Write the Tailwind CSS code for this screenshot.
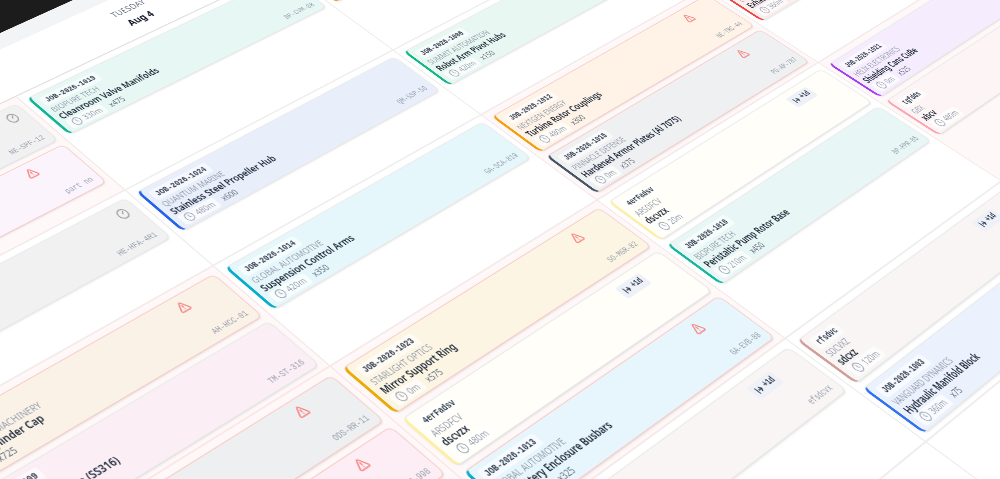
<!DOCTYPE html>
<html lang="en">
  <head>
    <meta charset="UTF-8" />
    <title>Schedule board</title>
    <script src="https://cdn.jsdelivr.net/npm/@tailwindcss/browser@4"></script>
  </head>
  <body class="bg-white">
    <div class="w-[1000px] h-[479px] overflow-hidden bg-white font-['Noto_Sans',sans-serif]">
      <div
        id="board"
        class="w-[1920px] origin-top-left blur-[0.4px] grid grid-cols-[repeat(4,480px)] grid-rows-[60px_23px_72px_181px_136px_168px_248px_168px_168px] [transform:matrix3d(.63708,-.28167,0,.00020035,.59868,.49507,0,-.00022938,0,0,1,0,-381.96,158.86,0,.9809)]"
      >
        <div class="col-span-4 bg-[#1c1c1c]"></div>
        <div class="col-span-4 bg-[#f3f4f6]"></div>
        <div class="flex flex-col items-center justify-center border-b border-[#dcdcdc] bg-white">
          <span class="text-[13px] tracking-wide text-gray-500">MONDAY</span>
          <span class="text-[15px] font-bold text-gray-900">Aug 3</span>
        </div>
        <div class="flex flex-col items-center justify-center border-b border-[#dcdcdc] bg-white">
          <span class="text-[13px] tracking-wide text-gray-500">TUESDAY</span>
          <span class="text-[15px] font-bold text-gray-900">Aug 4</span>
        </div>
        <div class="flex flex-col items-center justify-center border-b border-[#dcdcdc] bg-white">
          <span class="text-[13px] tracking-wide text-gray-500">WEDNESDAY</span>
          <span class="text-[15px] font-bold text-gray-900">Aug 5</span>
        </div>
        <div class="flex flex-col items-center justify-center border-b border-[#dcdcdc] bg-white">
          <span class="text-[13px] tracking-wide text-gray-500">THURSDAY</span>
          <span class="text-[15px] font-bold text-gray-900">Aug 6</span>
        </div>
      </div>
    </div>

    <script>
      const clockIcon = `<svg class="w-3.5 h-3.5 shrink-0" viewBox="0 0 24 24" fill="none" stroke="currentColor" stroke-width="2"><circle cx="12" cy="12" r="10"/><path d="M12 6v6l4 2"/></svg>`;
      const warnIcon = `<svg class="w-4 h-4 text-[#f87f7f]" viewBox="0 0 24 24" fill="none" stroke="currentColor" stroke-width="2.5" stroke-linecap="round" stroke-linejoin="round"><path d="m21.7 18-8-14a2 2 0 0 0-3.5 0l-8 14A2 2 0 0 0 4 21h16a2 2 0 0 0 1.7-3"/><path d="M12 9v4M12 17h.01"/></svg>`;
      const gaugeIcon = `<svg class="w-4 h-4 text-[#9a9a9a]" viewBox="0 0 24 24" fill="none" stroke="currentColor" stroke-width="2.2" stroke-linecap="round"><circle cx="12" cy="12" r="10"/><path d="m12 12 4-5"/></svg>`;
      const shiftIcon = `<svg class="w-3 h-3" viewBox="0 0 24 24" fill="none" stroke="currentColor" stroke-width="3" stroke-linecap="round" stroke-linejoin="round"><path d="M4 5v14M9 12h11M15 7l5 5-5 5"/></svg>`;
      const shiftBadge = `<span class="flex items-center gap-1 rounded bg-[#eef1f8] px-1.5 py-0.5 font-['Liberation_Mono',monospace] text-[10px] leading-[14px] font-bold text-gray-700">${shiftIcon}+1d</span>`;

      const BG_RED = "bg-[#fef8f8] border border-[#fde6e6]";
      const BG_PLAIN = "bg-white border border-[#eeeeee]";

      function card(c) {
        const frame = c.warn ? "border-[#fbc9c4]" : "border-[#e9e9e9]";
        let top = "";
        if (c.warn) top = `<span class="absolute right-[57px] top-[7px]">${warnIcon}</span>`;
        if (c.gauge) top = `<span class="absolute right-[12px] top-[8px]">${gaugeIcon}</span>`;
        if (c.shift) top = `<span class="absolute right-[50px] top-[8px]">${shiftBadge}</span>`;
        return `<div class="relative h-[72px] shrink-0 overflow-hidden rounded-lg border border-l-4 shadow-sm px-2 pt-1.5 ${c.bg} ${frame} ${c.bar}">
          ${c.job ? `<div class="flex"><span class="rounded bg-white/60 px-1.5 font-['Liberation_Mono',monospace] text-[10.5px] leading-4 font-bold text-gray-700">${c.job}</span></div>
          <div class="mt-px text-[11px] leading-[14px] uppercase text-gray-400 whitespace-nowrap">${c.cust}</div>
          <div class="text-[12.5px] leading-[14px] font-semibold text-gray-800 whitespace-nowrap">${c.title}</div>
          <div class="flex items-center gap-2 text-[11px] leading-4 text-gray-500">
            <span class="flex items-center gap-1 rounded bg-white/70 px-1.5 text-gray-400">${clockIcon}${c.time}</span>
            <span>${c.qty}</span>
          </div>` : ""}
          ${top}
          <span class="absolute right-[10px] bottom-[4px] font-['Liberation_Mono',monospace] text-[10px] text-gray-400">${c.code}</span>
        </div>`;
      }

      function cell(tint, cards) {
        return `<div class="flex flex-col gap-2 p-2 ${tint}">${cards.map(card).join("")}</div>`;
      }

      const rows = [
        // row 1
        [
          [BG_RED, [
            { bg: "bg-[#f1f1f1]", bar: "border-l-[#e2e2e2]", gauge: 1, code: "NE-SPF-12" },
            { bg: "bg-[#fbf4fd]", bar: "border-l-[#fbcfcf]", warn: 1, code: "part no" },
          ]],
          [BG_PLAIN, [
            { bg: "bg-[#e7f7f4]", bar: "border-l-[#10b595]", job: "JOB-2026-1019", cust: "Biopure Tech", title: "Cleanroom Valve Manifolds", time: "330m", qty: "x475", code: "BP-CVM-88" },
          ]],
          [BG_PLAIN, [
            { bg: "bg-[#fef3e6]", bar: "border-l-[#f59e0b]", job: "JOB-2026-1007", cust: "Nextgen Energy", title: "Turbine Housing", time: "240m", qty: "x200", code: "NE-THG-12" },
          ]],
          [BG_PLAIN, []],
        ],
        // row 2
        [
          [BG_PLAIN, [
            { bg: "bg-[#f1f1f1]", bar: "border-l-[#e2e2e2]", gauge: 1, code: "HE-HFA-4R1" },
          ]],
          [BG_PLAIN, [
            { bg: "bg-[#e9eefb]", bar: "border-l-[#2563eb]", job: "JOB-2026-1024", cust: "Quantum Marine", title: "Stainless Steel Propeller Hub", time: "480m", qty: "x600", code: "QM-SSP-58" },
          ]],
          [BG_PLAIN, [
            { bg: "bg-[#e8f7f1]", bar: "border-l-[#10b981]", job: "JOB-2026-1006", cust: "Summit Automation", title: "Robot Arm Pivot Hubs", time: "420m", qty: "x150", code: "SA-RAP-22" },
          ]],
          [BG_PLAIN, []],
        ],
        // row 3
        [
          [BG_RED, [
            { bg: "bg-[#faf1e7]", bar: "border-l-[#f59e0b]", warn: 1, job: "JOB-2026-1011", cust: "Magnum Heavy Machinery", title: "Hydraulics Cylinder Cap", time: "360m", qty: "x725", code: "AH-HCC-01" },
            { bg: "bg-[#fbeef5]", bar: "border-l-[#f9a8d4]", job: "JOB-2026-1009", cust: "Titan Medical", title: "Surgical Table Frame (SS316)", time: "300m", qty: "x250", code: "TM-ST-316" },
          ]],
          [BG_PLAIN, [
            { bg: "bg-[#e6f7fb]", bar: "border-l-[#06aecb]", job: "JOB-2026-1014", cust: "Global Automotive", title: "Suspension Control Arms", time: "420m", qty: "x350", code: "GA-SCA-819" },
          ]],
          [BG_RED, [
            { bg: "bg-[#fef3e6]", bar: "border-l-[#f59e0b]", warn: 1, job: "JOB-2026-1012", cust: "Nextgen Energy", title: "Turbine Rotor Couplings", time: "480m", qty: "x300", code: "NE-TRC-44" },
            { bg: "bg-[#eff0f2]", bar: "border-l-[#475569]", warn: 1, job: "JOB-2026-1015", cust: "Pinnacle Defense", title: "Hardened Armor Plates (Al 7075)", time: "0m", qty: "x375", code: "PD-AP-787" },
          ]],
          [BG_PLAIN, [
            { bg: "bg-[#fdeeee]", bar: "border-l-[#ef4444]", job: "JOB-2026-1017", cust: "Eclipse Aero", title: "Exhaust Nozzle", time: "360m", qty: "x120", code: "EA-EN-12" },
          ]],
        ],
        // row 4
        [
          [BG_RED, [
            { bg: "bg-[#eeeff1]", bar: "border-l-[#94a3b8]", warn: 1, code: "ODS-RR-11" },
            { bg: "bg-[#fdeef5]", bar: "border-l-[#f9a8d4]", warn: 1, code: "BP-998" },
          ]],
          [BG_RED, [
            { bg: "bg-[#fdf5e3]", bar: "border-l-[#eaaa08]", warn: 1, job: "JOB-2026-1023", cust: "Starlight Optics", title: "Mirror Support Ring", time: "0m", qty: "x575", code: "SO-MGR-82" },
            { bg: "bg-[#fffef8]", bar: "border-l-[#fdf0a5]", shift: 1, job: "4erFadsv", cust: "ARSDFCV", title: "dscvzx", time: "480m", qty: "", code: "" },
            { bg: "bg-[#e7f6fc]", bar: "border-l-[#06aecb]", warn: 1, job: "JOB-2026-1013", cust: "Global Automotive", title: "EV Battery Enclosure Busbars", time: "300m", qty: "x325", code: "GA-EVB-88" },
          ]],
          [BG_PLAIN, [
            { bg: "bg-[#fffef8]", bar: "border-l-[#fdf0a5]", shift: 1, job: "4erFadsv", cust: "ARSDFCV", title: "dscvzx", time: "20m", qty: "", code: "" },
            { bg: "bg-[#e8f7f5]", bar: "border-l-[#14b8a0]", job: "JOB-2026-1018", cust: "Biopure Tech", title: "Peristaltic Pump Rotor Base", time: "210m", qty: "x450", code: "BP-PPR-85" },
          ]],
          [BG_RED, [
            { bg: "bg-[#f5ecfe]", bar: "border-l-[#a23cf0]", job: "JOB-2026-1021", cust: "Helix Electronics", title: "Shielding Cans CuBe", time: "0m", qty: "x525", code: "HE-SC-21" },
            { bg: "bg-[#fdf5f5]", bar: "border-l-[#fda4af]", job: "tgfdds", cust: "GBX", title: "xbcv", time: "480m", qty: "", code: "" },
          ]],
        ],
        // row 5
        [
          [BG_PLAIN, []],
          [BG_PLAIN, [
            { bg: "bg-[#f8f5f4]", bar: "border-l-[#dcc8c4]", shift: 1, job: "rfsdvc", cust: "SDCVXZ", title: "sdcxz", time: "120m", qty: "", code: "efsdcvx" },
          ]],
          [BG_PLAIN, [
            { bg: "bg-[#f8f5f4]", bar: "border-l-[#cf9f98]", shift: 1, job: "rfsdvc", cust: "SDCVXZ", title: "sdcxz", time: "120m", qty: "", code: "" },
            { bg: "bg-[#ebf2fd]", bar: "border-l-[#2f73f0]", job: "JOB-2026-1003", cust: "Vanguard Dynamics", title: "Hydraulic Manifold Block", time: "360m", qty: "x75", code: "VD-HMB-03" },
          ]],
          [BG_PLAIN, []],
        ],
        // row 6
        [
          [BG_PLAIN, []],
          [BG_PLAIN, []],
          [BG_PLAIN, []],
          [BG_PLAIN, []],
        ],
      ];

      document
        .getElementById("board")
        .insertAdjacentHTML(
          "beforeend",
          rows.map((r) => r.map(([tint, cards]) => cell(tint, cards)).join("")).join("")
        );
    </script>
  </body>
</html>
